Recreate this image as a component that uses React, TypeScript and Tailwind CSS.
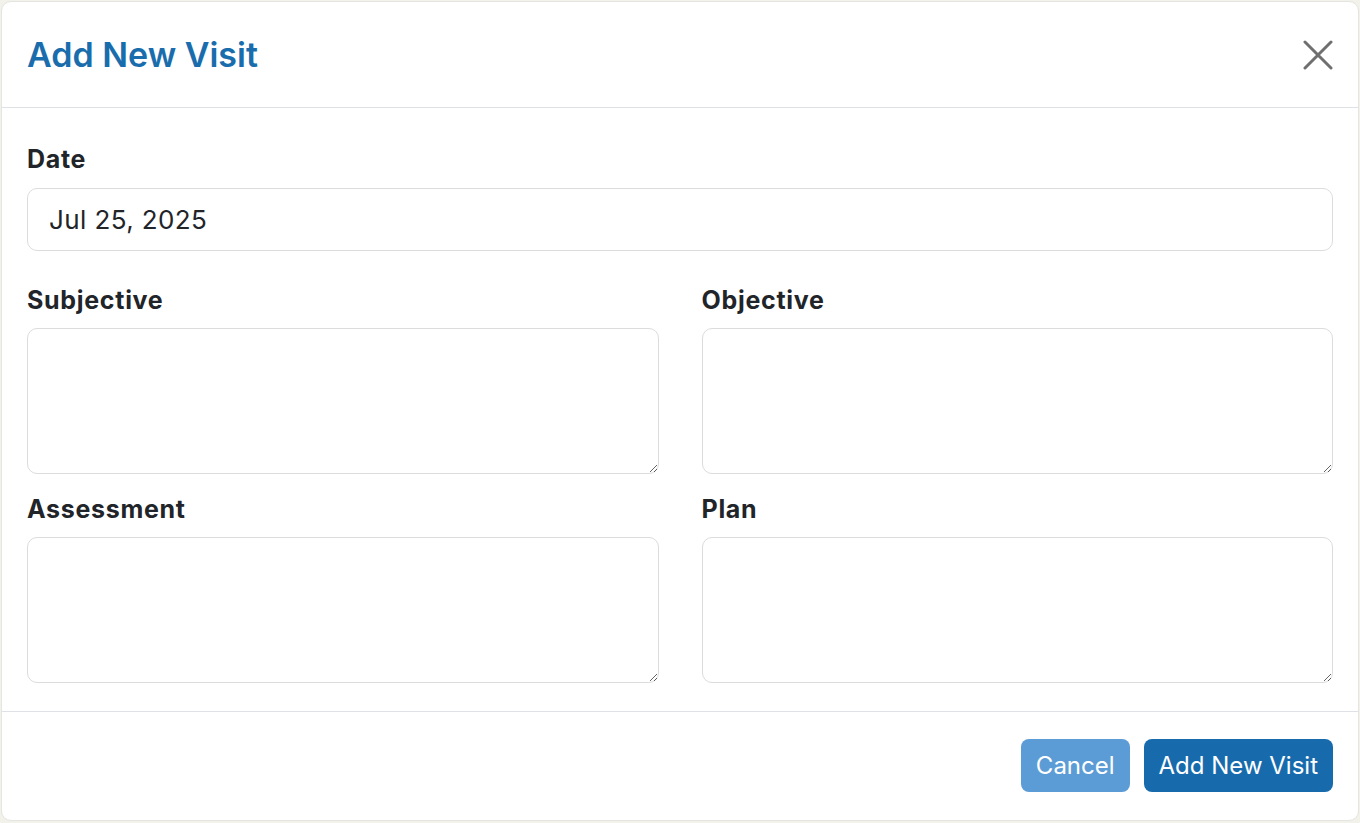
import React from "react";

function Field({ label, className }: { label: string; className?: string }) {
  return (
    <div className={className}>
      <label className="block text-[25px] leading-[36px] font-bold text-[#212529] tracking-[0.7px] mb-[10px]">{label}</label>
      <textarea className="block w-full h-[146px] rounded-[10px] border border-[#dcdcdc] bg-white outline-none" />
    </div>
  );
}

export default function App() {
  return (
    <div
      className="w-[1360px] h-[823px] bg-[#f2f2ea] pt-[1px] pl-[1px] pr-[1px] pb-[2px]"
      style={{ fontFamily: "Inter, 'Noto Sans', sans-serif" }}
    >
      <div className="h-full w-full rounded-[10px] bg-white border border-[#e4e4e0] flex flex-col overflow-hidden">
        <div className="h-[106px] shrink-0 pl-[25px] pr-[25px] flex items-center justify-between border-b border-[#dee2e6]">
          <h5 className="text-[34px] font-semibold text-[#1a6dac]">Add New Visit</h5>
          <button className="w-[30px] h-[30px] flex items-center justify-center">
            <svg width="30" height="30" viewBox="0 0 30 30" fill="none" stroke="#6f6f6f" strokeWidth="3" strokeLinecap="round">
              <path d="M2 2 L28 28 M28 2 L2 28" />
            </svg>
          </button>
        </div>
        <div className="pl-[25px] pr-[25px] pt-[33px] pb-[28px] border-b border-[#dee2e6]">
          <label className="block text-[25px] leading-[36px] font-bold text-[#212529] tracking-[0.7px] mb-[11px]">Date</label>
          <div className="h-[63px] rounded-[10px] border border-[#dcdcdc] flex items-center px-[21px] text-[26px] text-[#212529] tracking-[0.4px]">
            Jul 25, 2025
          </div>
          <div className="grid grid-cols-2 gap-x-[43px] mt-[31px]">
            <Field label="Subjective" />
            <Field label="Objective" />
            <Field label="Assessment" className="mt-[17px]" />
            <Field label="Plan" className="mt-[17px]" />
          </div>
        </div>
        <div className="flex justify-end gap-[14px] pl-[25px] pr-[25px] pt-[27px]">
          <button className="h-[53px] px-[15px] rounded-[8px] bg-[#5c9cd6] text-white text-[24px]">Cancel</button>
          <button className="h-[53px] px-[15px] rounded-[8px] bg-[#176bad] text-white text-[24px]">Add New Visit</button>
        </div>
      </div>
    </div>
  );
}
